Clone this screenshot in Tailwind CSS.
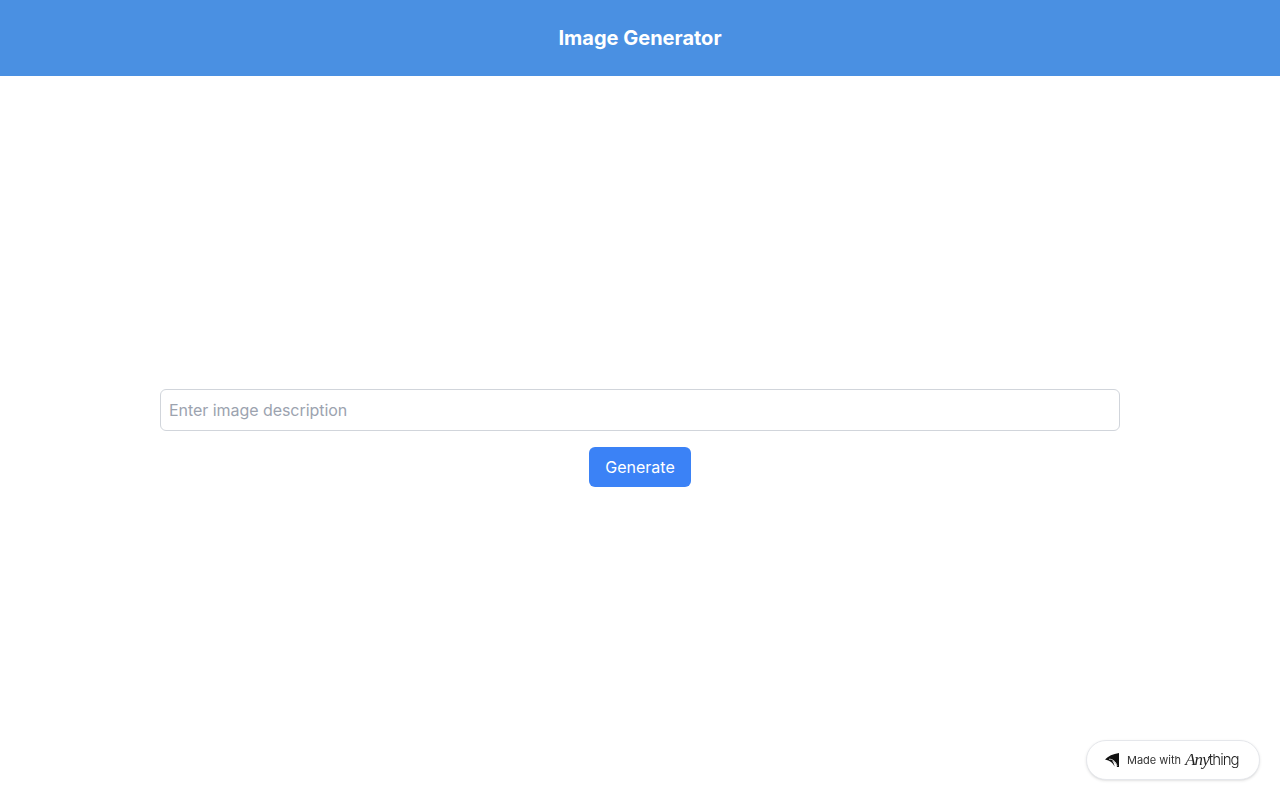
<!DOCTYPE html>
<html lang="en">
<head>
    <meta charset="UTF-8">
    <meta name="viewport" content="width=device-width, initial-scale=1.0">
    <title>Image Generator</title>
    <script src="https://cdn.jsdelivr.net/npm/@tailwindcss/browser@4"></script>
</head>
<body class="bg-white font-[Inter,sans-serif] h-screen overflow-hidden">

    <header class="h-[76px] bg-[#4a90e2] flex items-center justify-center">
        <h1 class="text-xl font-bold text-white">Image Generator</h1>
    </header>

    <main class="h-[724px] flex flex-col items-center justify-center px-40">
        <input type="text" placeholder="Enter image description" class="w-full h-[42px] px-2 text-base tracking-[-0.05px] border border-[#d1d5db] rounded-md placeholder:text-[#9ca3af]">
        <button class="mt-4 h-10 px-4 bg-[#3b82f6] text-white text-base rounded-md">Generate</button>
    </main>

    <div class="fixed right-5 bottom-5 h-10 w-[174px] flex items-center pl-[18px] bg-white border border-[#e5e7eb] rounded-full shadow-sm">
        <svg class="w-[14px] h-[14px]" viewBox="0 0 14 14">
            <path d="M0 6.5 C3 3 8 1 14 0 L14 14 L12 14 C11.5 11 10 8.5 7 7.5 C8.5 9.5 9.2 11 9.5 13.5 C8 10 5 7.5 0 6.5 Z" fill="#111"/>
            <path d="M4 6.2 C7.5 6 11 8.5 12 13" fill="none" stroke="#fff" stroke-width="0.8"/>
        </svg>
        <span class="ml-2 text-[11px] text-[#333]">Made with</span>
        <span class="ml-1 text-[17px] italic font-['Liberation_Serif',serif] tracking-[-0.9px] text-[#222]">Any</span>
        <span class="text-[15px] font-light tracking-[-1px] text-[#222]">thing</span>
    </div>

</body>
</html>
